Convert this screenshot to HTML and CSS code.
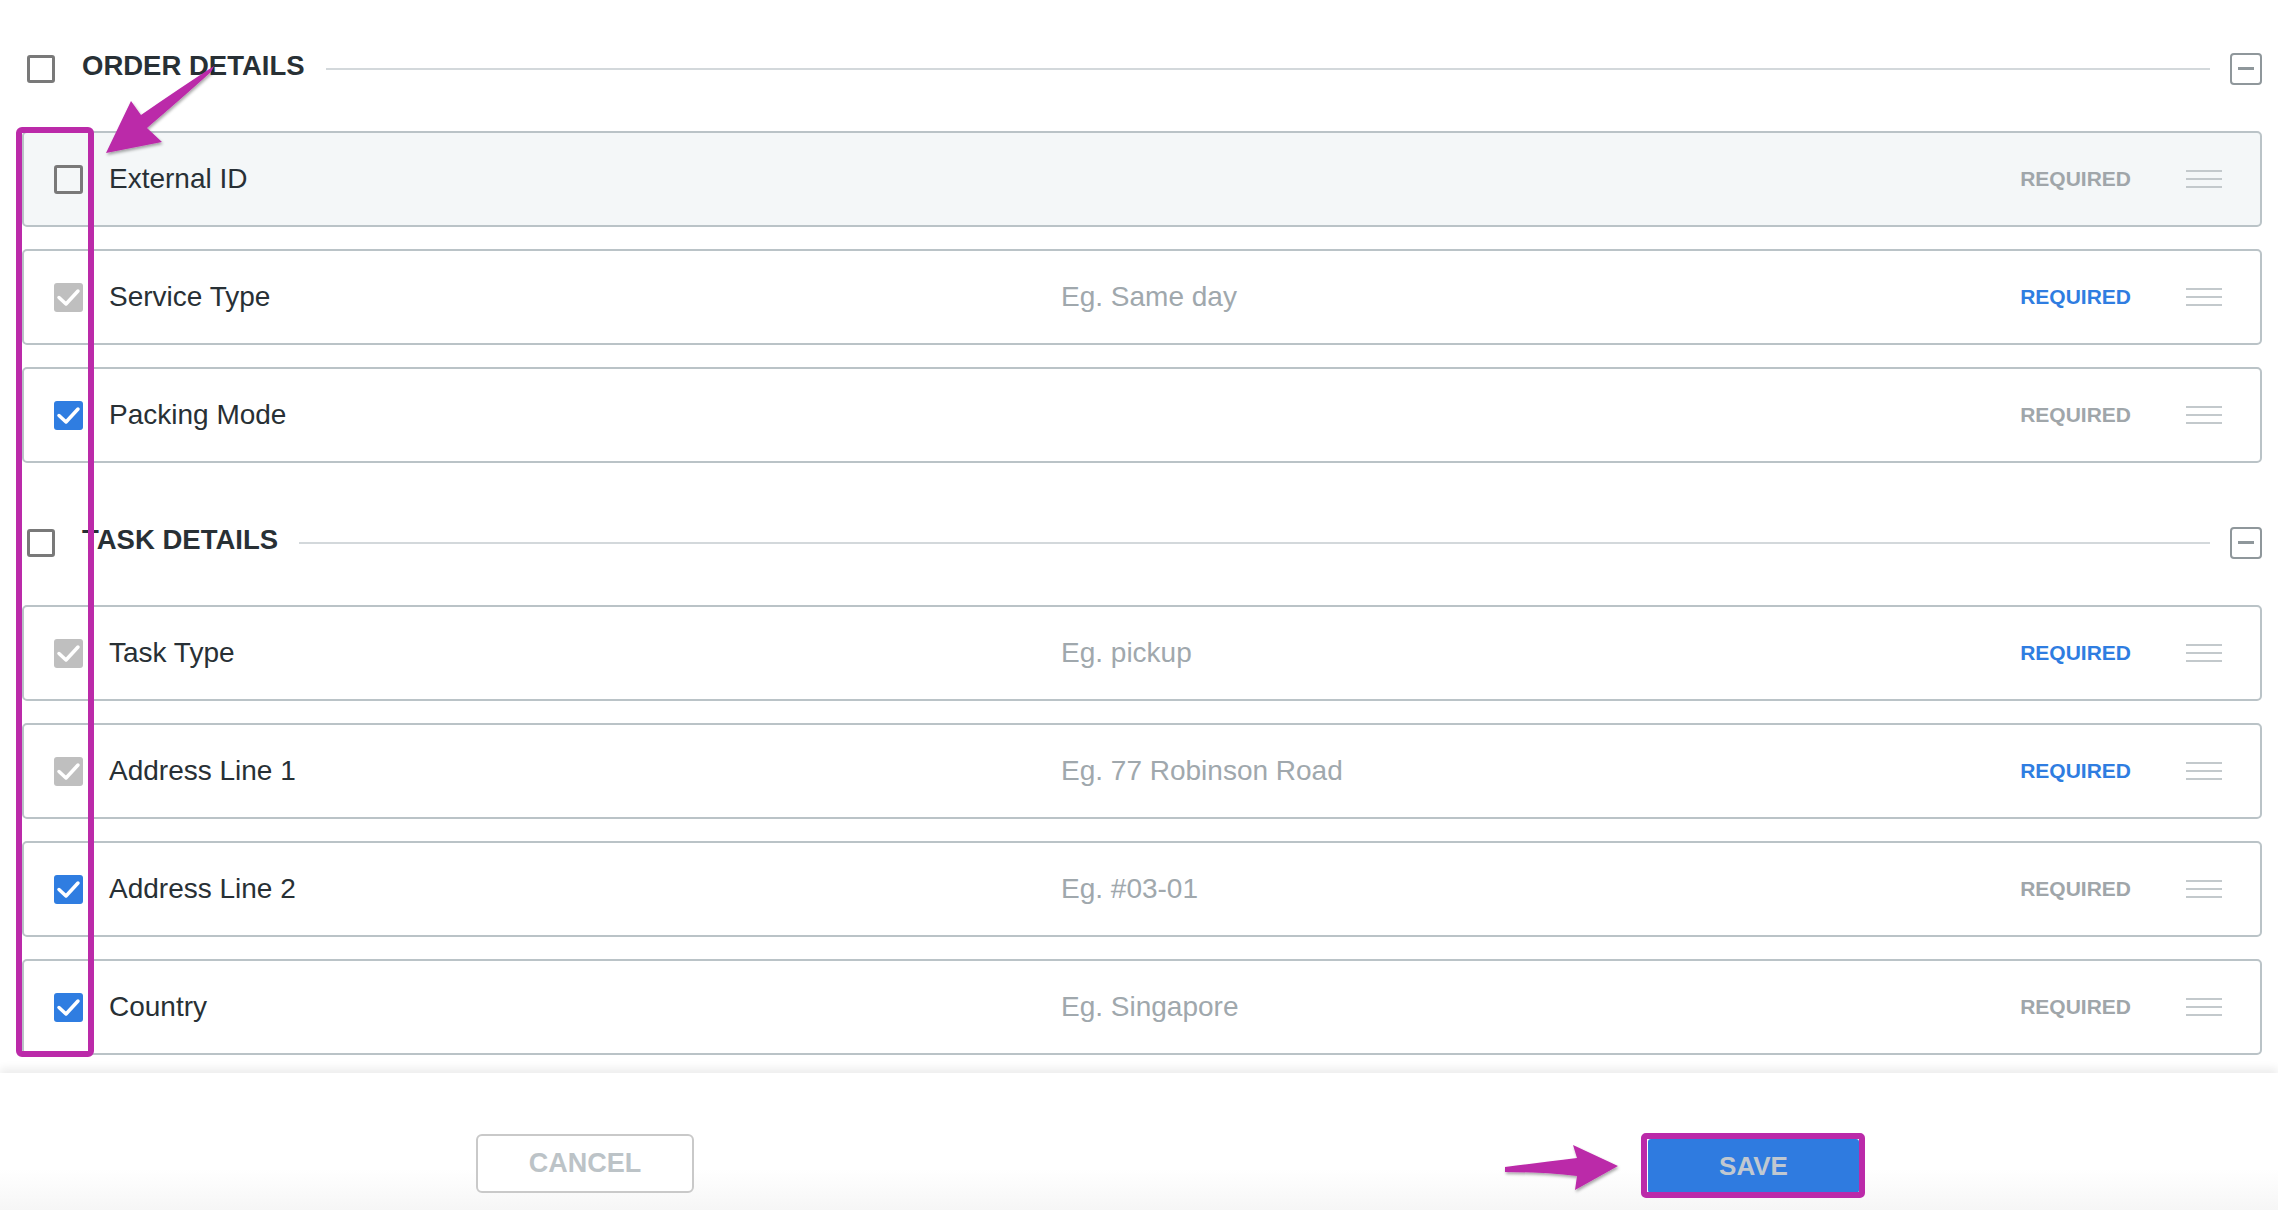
FILE: index.html
```html
<!DOCTYPE html>
<html lang="en">
<head>
  <meta charset="UTF-8" />
  <title>Field Settings</title>
  <link rel="stylesheet" href="styles.css">
</head>
<body>
  <div class="page">
    <div class="fields">

      <section class="group">
        <div class="group-head">
          <span class="cb"></span>
          <h2>ORDER DETAILS</h2>
          <span class="rule"></span>
          <span class="collapse"></span>
        </div>
        <div class="row active">
          <span class="cb"></span>
          <span class="label">External ID</span>
          <span class="hint"></span>
          <span class="req">REQUIRED</span>
          <span class="handle"><i></i><i></i><i></i></span>
        </div>
        <div class="row">
          <span class="cb locked"><svg viewBox="0 0 29 29"><path d="M5 14.5l7 6.5L24 8" /></svg></span>
          <span class="label">Service Type</span>
          <span class="hint">Eg. Same day</span>
          <span class="req on">REQUIRED</span>
          <span class="handle"><i></i><i></i><i></i></span>
        </div>
        <div class="row">
          <span class="cb checked"><svg viewBox="0 0 29 29"><path d="M5 14.5l7 6.5L24 8" /></svg></span>
          <span class="label">Packing Mode</span>
          <span class="hint"></span>
          <span class="req">REQUIRED</span>
          <span class="handle"><i></i><i></i><i></i></span>
        </div>
      </section>

      <section class="group">
        <div class="group-head">
          <span class="cb"></span>
          <h2>TASK DETAILS</h2>
          <span class="rule"></span>
          <span class="collapse"></span>
        </div>
        <div class="row">
          <span class="cb locked"><svg viewBox="0 0 29 29"><path d="M5 14.5l7 6.5L24 8" /></svg></span>
          <span class="label">Task Type</span>
          <span class="hint">Eg. pickup</span>
          <span class="req on">REQUIRED</span>
          <span class="handle"><i></i><i></i><i></i></span>
        </div>
        <div class="row">
          <span class="cb locked"><svg viewBox="0 0 29 29"><path d="M5 14.5l7 6.5L24 8" /></svg></span>
          <span class="label">Address Line 1</span>
          <span class="hint">Eg. 77 Robinson Road</span>
          <span class="req on">REQUIRED</span>
          <span class="handle"><i></i><i></i><i></i></span>
        </div>
        <div class="row">
          <span class="cb checked"><svg viewBox="0 0 29 29"><path d="M5 14.5l7 6.5L24 8" /></svg></span>
          <span class="label">Address Line 2</span>
          <span class="hint">Eg. #03-01</span>
          <span class="req">REQUIRED</span>
          <span class="handle"><i></i><i></i><i></i></span>
        </div>
        <div class="row">
          <span class="cb checked"><svg viewBox="0 0 29 29"><path d="M5 14.5l7 6.5L24 8" /></svg></span>
          <span class="label">Country</span>
          <span class="hint">Eg. Singapore</span>
          <span class="req">REQUIRED</span>
          <span class="handle"><i></i><i></i><i></i></span>
        </div>
      </section>
    </div>

    <div class="footer">
      <button class="btn btn-cancel">CANCEL</button>
      <button class="btn btn-save">SAVE</button>
    </div>

    <!-- annotation marks drawn over the screenshot -->
    <svg class="marks" viewBox="0 0 2278 1210">
      <defs>
        <filter id="shade" x="-20%" y="-20%" width="140%" height="140%">
          <feDropShadow dx="1" dy="2" stdDeviation="1.5" flood-opacity="0.35" />
        </filter>
      </defs>
      <rect x="19" y="130" width="72" height="924" rx="3" />
      <rect x="1644" y="1136" width="218" height="59" rx="2" />
      <path class="arrow" d="M214 66 Q180 88 141 115 L131 101 L106 153 L162 142 L147 128 Q182 98 211 72 Z" />
      <path class="arrow" d="M1505 1167 Q1545 1162 1577 1158 L1573 1145 L1618 1166 L1575 1190 L1577 1176 Q1545 1172 1505 1172 Z" />
    </svg>
  </div>
</body>
</html>
```

FILE: styles.css
```css
* {
  box-sizing: border-box;
}

body {
  margin: 0;
  font-family: "Liberation Sans", Arial, sans-serif;
  color: #283035;
  background: #fff;
}

.page {
  position: relative;
  width: 2278px;
  height: 1210px;
  overflow: hidden;
}

.fields {
  padding: 47px 16px 18px 22px;
}

.group {
  display: flex;
  flex-direction: column;
  gap: 22px;
}

.group + .group {
  margin-top: 58px;
}

.group-head {
  display: flex;
  align-items: center;
  height: 44px;
  margin-bottom: 18px;
}

.group-head .cb {
  width: 28px;
  height: 28px;
  margin-left: 5px;
}

.group-head h2 {
  margin: 0 0 0 27px;
  padding-bottom: 7px;
  font-size: 27.5px;
  font-weight: bold;
  color: #283035;
}

.rule {
  flex: 1;
  height: 2px;
  margin: 0 20px 0 21px;
  background: #d3d8db;
}

.collapse {
  position: relative;
  width: 32px;
  height: 32px;
  border: 2px solid #8f979b;
  border-radius: 4px;
}

.collapse::after {
  content: "";
  position: absolute;
  left: 6px;
  right: 6px;
  top: 12px;
  height: 3px;
  background: #8f979b;
}

.cb {
  display: inline-flex;
  flex: none;
  width: 29px;
  height: 29px;
  border: 3px solid #797979;
  border-radius: 3px;
}

.cb svg {
  width: 100%;
  height: 100%;
}

.cb path {
  fill: none;
  stroke: #fff;
  stroke-width: 3.5;
  stroke-linecap: round;
  stroke-linejoin: round;
}

.cb.checked,
.cb.locked {
  border: none;
}

.cb.checked {
  background: #2f7de1;
}

.cb.locked {
  background: #bfbfbf;
}

.row {
  display: flex;
  align-items: center;
  height: 96px;
  padding: 0 38px 0 30px;
  border: 2px solid #bac3c7;
  border-radius: 5px;
  background: #fff;
}

.row.active {
  background: #f4f7f8;
}

.label {
  flex: 0 0 952px;
  margin-left: 26px;
  font-size: 28px;
  color: #283035;
}

.hint {
  flex: 1;
  font-size: 28px;
  color: #a0a8ad;
}

.req {
  font-size: 21px;
  font-weight: bold;
  color: #a0a6aa;
}

.req.on {
  color: #2f7de1;
}

.handle {
  display: flex;
  flex-direction: column;
  gap: 6px;
  width: 36px;
  margin-left: 55px;
}

.handle i {
  display: block;
  height: 2px;
  background: #c3c9cc;
}

.footer {
  display: flex;
  align-items: flex-start;
  height: 137px;
  padding: 61px 0 0 476px;
  background: linear-gradient(#fff 70%, #f6f6f6);
  box-shadow: 0 -5px 8px rgba(0, 0, 0, 0.07);
}

.btn {
  font-family: "Liberation Sans", Arial, sans-serif;
  font-weight: bold;
  cursor: pointer;
}

.btn-cancel {
  width: 218px;
  height: 59px;
  border: 2px solid #c9c9c9;
  border-radius: 6px;
  background: #fff;
  color: #bcc3c7;
  font-size: 27px;
}

.btn-save {
  width: 211px;
  height: 54px;
  margin: 5px 0 0 954px;
  border: none;
  border-radius: 3px;
  background: #2f7be0;
  color: #c0c8d0;
  font-size: 26px;
}

.marks {
  position: absolute;
  top: 0;
  left: 0;
  width: 2278px;
  height: 1210px;
  pointer-events: none;
}

.marks rect {
  fill: none;
  stroke: #bb2aa9;
  stroke-width: 6;
}

.marks .arrow {
  fill: #bb2aa9;
  filter: url(#shade);
}
```
